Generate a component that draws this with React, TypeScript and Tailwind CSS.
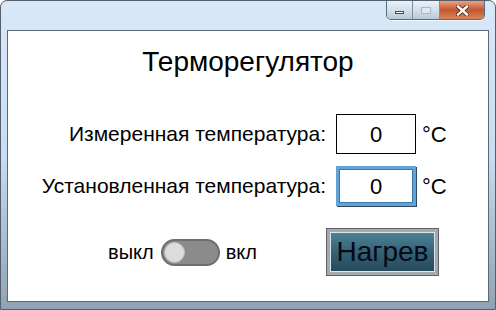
import React from 'react';

function CaptionButtons() {
  return (
    <div className="absolute right-[10px] top-0 flex h-[19px] overflow-hidden rounded-b-[5px] border border-t-0 border-[#5a6b7e] shadow-[0_1px_0_rgba(255,255,255,0.7)]">
      <div className="flex w-[26px] items-center justify-center border-r border-[#7d8ea1] bg-gradient-to-b from-[#eaf1f8] via-[#d3dfeb] to-[#b8c8d9]">
        <span className="mt-[5px] block h-[3px] w-[9px] border border-[#3c4b5c] bg-white" />
      </div>
      <div className="flex w-[27px] items-center justify-center border-r border-[#7d8ea1] bg-gradient-to-b from-[#eaf1f8] via-[#d3dfeb] to-[#b8c8d9]">
        <span className="block h-[7px] w-[10px] border border-[#a9b6c4] bg-[#dfe7ef]" />
      </div>
      <div className="flex w-[44px] items-center justify-center bg-gradient-to-b from-[#eaa184] via-[#c4552f] to-[#d8845a]">
        <svg width="13" height="11" viewBox="0 0 13 11">
          <path d="M2 1.5 L11 9.5 M11 1.5 L2 9.5" stroke="#4a2a1c" strokeWidth="4" strokeLinecap="square" />
          <path d="M2 1.5 L11 9.5 M11 1.5 L2 9.5" stroke="#ffffff" strokeWidth="2.4" strokeLinecap="square" />
        </svg>
      </div>
    </div>
  );
}

function Toggle() {
  return (
    <div className="flex h-[27px] w-[59px] items-center rounded-full border-2 border-[#6e6e73] bg-[#8b8b8b] p-[1px]">
      <span className="block h-[21px] w-[21px] rounded-full border border-[#b9bcc6] bg-[#dcdcdc]" />
    </div>
  );
}

export default function App() {
  return (
    <div className="relative flex h-[310px] w-[496px] flex-col overflow-hidden rounded-t-[7px] border border-[#55606c] bg-gradient-to-b from-[#d8e8f8] via-[#c8ddf3] to-[#8fa3b3] font-['Liberation_Sans',Arial,sans-serif]">
      <CaptionButtons />
      <div className="h-[29px] shrink-0" />
      <div className="mx-[6px] mb-[7px] flex flex-1 flex-col border border-[#5b6776] bg-white">
        <h1 className="mt-[14px] text-center text-[28px] leading-[34px] text-black">
          Терморегулятор
        </h1>
        <div className="mt-[35px] flex flex-col gap-[12px]">
          <div className="flex items-center">
            <span className="w-[318px] text-right text-[21px] text-black">Измеренная температура:</span>
            <div className="ml-[10px] flex h-[40px] w-[80px] items-center justify-center border border-black text-[22px] text-black">
              0
            </div>
            <span className="ml-[6px] text-[22px] text-black">°C</span>
          </div>
          <div className="flex items-center">
            <span className="w-[318px] text-right text-[21px] text-black">Установленная температура:</span>
            <div className="ml-[10px] flex h-[40px] w-[80px] items-center justify-center border-[3px] border-[#63a2d6] text-[22px] text-black shadow-[1px_1px_0_#2f4a60,inset_0_0_0_1px_#3f79a8]">
              0
            </div>
            <span className="ml-[6px] text-[22px] text-black">°C</span>
          </div>
        </div>
        <div className="mt-[23px] flex items-center">
          <span className="ml-[100px] text-[20px] text-black">выкл</span>
          <div className="ml-[7px]">
            <Toggle />
          </div>
          <span className="ml-[6px] text-[20px] text-black">вкл</span>
          <button className="ml-[70px] flex h-[46px] w-[111px] items-center justify-center border-[3px] border-[#a3aaad] bg-gradient-to-b from-[#4f8399] via-[#366174] to-[#24495b] text-[28px] text-[#050a18] shadow-[inset_0_0_0_1px_#dfe5e8,0_0_0_1px_#5c6468]">
            Нагрев
          </button>
        </div>
      </div>
    </div>
  );
}
